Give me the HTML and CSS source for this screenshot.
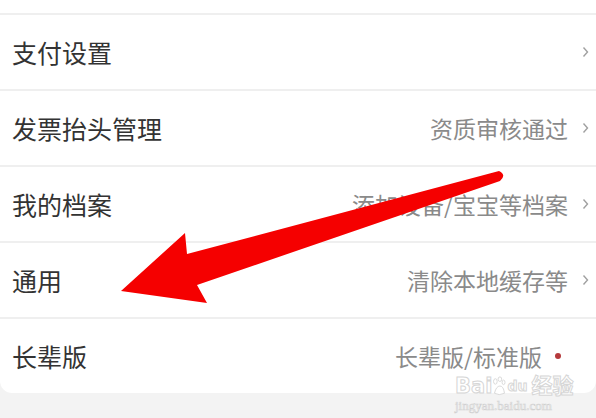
FILE: index.html
```html
<!DOCTYPE html>
<html>
  <head>
    <title>设置</title>
    <link rel="stylesheet" href="styles.css">
  </head>
  <body>
    <div class="page">
      <!-- settings list -->
      <div class="card">
        <div class="card-top"></div>
        <div class="row">
          <span class="label">支付设置</span>
          <span class="extra">
            <svg class="chevron" width="7" height="12" viewBox="0 0 7 12"><path d="M1.5 1.5 L5.5 6 L1.5 10.5" fill="none" stroke="#a0a0a0" stroke-width="1.4"/></svg>
          </span>
        </div>
        <div class="row">
          <span class="label">发票抬头管理</span>
          <span class="extra">
            <span class="value">资质审核通过</span>
            <svg class="chevron" width="7" height="12" viewBox="0 0 7 12"><path d="M1.5 1.5 L5.5 6 L1.5 10.5" fill="none" stroke="#a0a0a0" stroke-width="1.4"/></svg>
          </span>
        </div>
        <div class="row">
          <span class="label">我的档案</span>
          <span class="extra">
            <span class="value">添加设备/宝宝等档案</span>
            <svg class="chevron" width="7" height="12" viewBox="0 0 7 12"><path d="M1.5 1.5 L5.5 6 L1.5 10.5" fill="none" stroke="#a0a0a0" stroke-width="1.4"/></svg>
          </span>
        </div>
        <div class="row">
          <span class="label">通用</span>
          <span class="extra">
            <span class="value">清除本地缓存等</span>
            <svg class="chevron" width="7" height="12" viewBox="0 0 7 12"><path d="M1.5 1.5 L5.5 6 L1.5 10.5" fill="none" stroke="#a0a0a0" stroke-width="1.4"/></svg>
          </span>
        </div>
        <div class="row">
          <span class="label">长辈版</span>
          <span class="extra">
            <span class="value">长辈版/标准版</span>
            <span class="dot"></span>
          </span>
        </div>
      </div>

      <!-- red arrow drawn over the list -->
      <svg class="arrow" width="596" height="418" viewBox="0 0 596 418">
        <path d="M121 291 L185 233 L187 254 L499 171 Q507 175 500 181 L197 285 L207 303 Z" fill="#f50000"/>
      </svg>

      <!-- watermark -->
      <div class="watermark">
        <div class="wm-logo">
          <span>Bai</span>
          <svg class="paw" width="14" height="20" viewBox="0 0 14 22">
            <ellipse cx="3" cy="6" rx="2" ry="3" fill="#fff" stroke="#d6d6d6"/>
            <ellipse cx="8" cy="3.5" rx="2" ry="2.5" fill="#fff" stroke="#d6d6d6"/>
            <ellipse cx="12" cy="7" rx="1.6" ry="2.5" fill="#fff" stroke="#d6d6d6"/>
            <path d="M2 19 Q4 11 8 11 Q12 11 13 19 Q7 22 2 19 Z" fill="#fff" stroke="#d6d6d6"/>
          </svg>
          <span class="du">du</span>
          <span class="jy">经验</span>
        </div>
        <div class="wm-url">jingyan.baidu.com</div>
      </div>
    </div>
  </body>
</html>
```

FILE: styles.css
```css
/* page */
body {
  margin: 0;
  background-color: #f3f3f3;
  font-family: "Noto Sans CJK SC", "Noto Sans", sans-serif;
}

.page {
  position: relative;
  width: 596px;
  height: 418px;
  overflow: hidden;
}

/* list card */
.card {
  display: flex;
  flex-direction: column;
  gap: 2px;
  background-color: #efefef;
  border-radius: 0 0 12px 12px;
  overflow: hidden;
}

.card-top {
  height: 13px;
  background-color: #fff;
}

.row {
  height: 74px;
  background-color: #fff;
  display: flex;
  align-items: center;
  justify-content: space-between;
  padding: 0 7px 0 12px;
}

.label {
  font-size: 25px;
  line-height: 30px;
  color: #333;
}

.extra {
  display: flex;
  align-items: center;
}

.value {
  font-size: 23px;
  line-height: 24px;
  color: #8a8a8a;
}

.chevron {
  margin-left: 14px;
}

.dot {
  width: 6px;
  height: 6px;
  border-radius: 50%;
  background-color: #b53a3c;
  margin-left: 13px;
  margin-right: 28px;
}

/* overlays */
.arrow {
  position: absolute;
  top: 0;
  left: 0;
}

.watermark {
  position: absolute;
  left: 455px;
  top: 376px;
  color: #fff;
}

.wm-logo {
  display: flex;
  align-items: center;
  font-family: "DejaVu Sans", "Noto Sans CJK SC", sans-serif;
  font-size: 21px;
  font-weight: bold;
  line-height: 20px;
  -webkit-text-stroke: 1px #d6d6d6;
}

.wm-logo .du {
  font-size: 14px;
  margin-left: 1px;
}

.wm-logo .jy {
  margin-left: 4px;
}

.wm-url {
  font-family: "Liberation Serif", serif;
  font-size: 13px;
  line-height: 14px;
  margin-top: 3px;
  -webkit-text-stroke: 0.6px #d0d0d0;
}
```
